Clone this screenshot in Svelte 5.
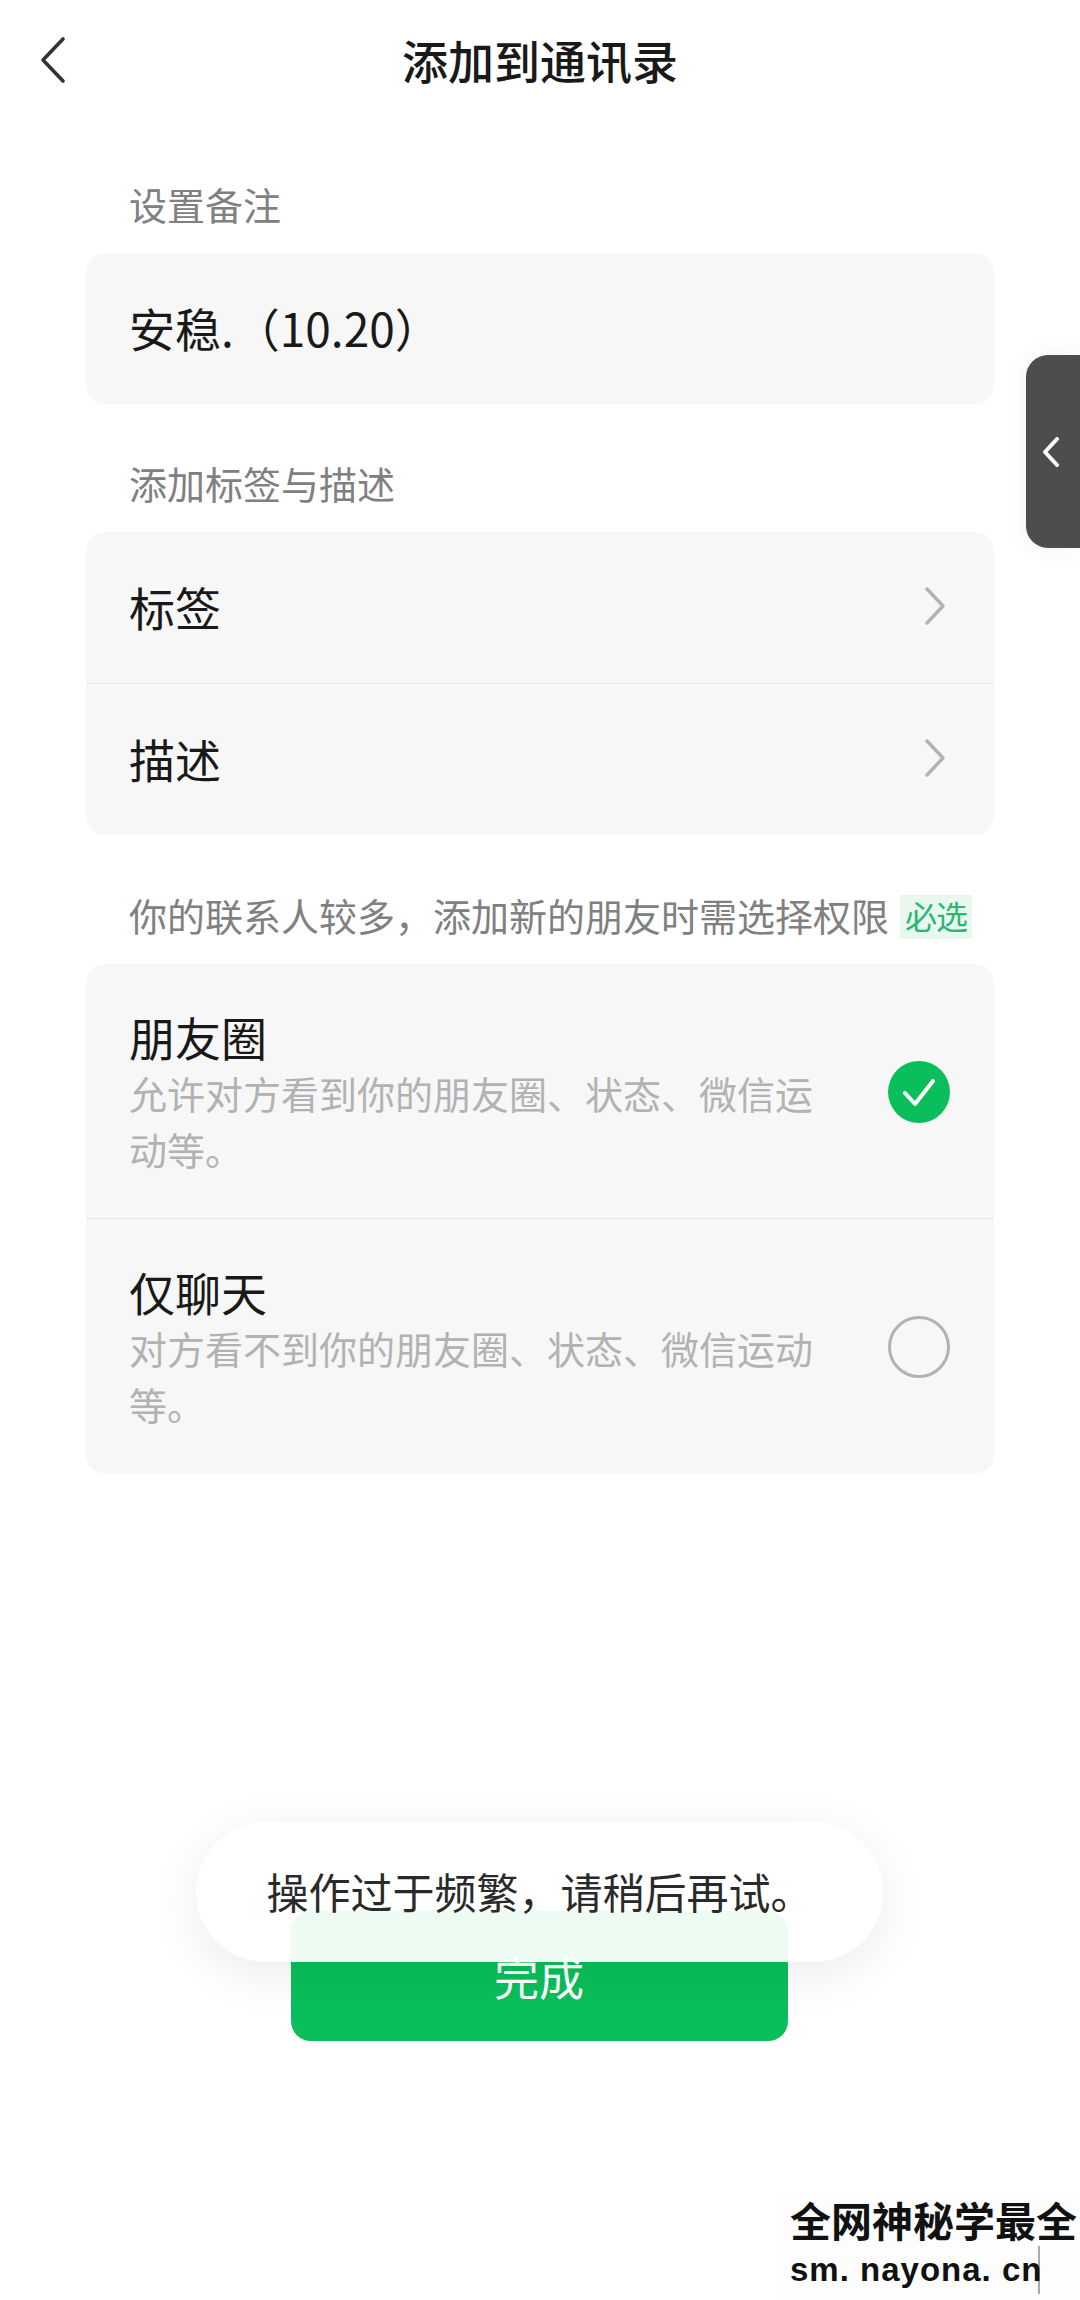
<script>
  const options = [
    { title: '朋友圈', desc: '允许对方看到你的朋友圈、状态、微信运动等。', checked: true },
    { title: '仅聊天', desc: '对方看不到你的朋友圈、状态、微信运动等。', checked: false }
  ];
  const links = ['标签', '描述'];
</script>

<div class="page" lang="zh-CN">
  <header class="header">
    <svg class="back" width="30" height="48" viewBox="0 0 30 48" fill="none" aria-hidden="true">
      <path d="M25 3 L5 24 L25 45" stroke="#333" stroke-width="3.6" stroke-linecap="round" stroke-linejoin="round" />
    </svg>
    <h1>添加到通讯录</h1>
  </header>

  <main class="content">
    <div class="label first">设置备注</div>
    <div class="card"><div class="row">安稳.（10.20）</div></div>

    <div class="label">添加标签与描述</div>
    <div class="card">
      {#each links as link}
        <div class="row link">
          <span>{link}</span>
          <svg width="22" height="38" viewBox="0 0 22 38" fill="none" aria-hidden="true">
            <path d="M3 2 L19 19 L3 36" stroke="#b2b2b2" stroke-width="3.4" stroke-linecap="round" stroke-linejoin="round" />
          </svg>
        </div>
      {/each}
    </div>

    <div class="label perm">
      <span class="perm-text">你的联系人较多，添加新的朋友时需选择权限</span>
      <span class="badge">必选</span>
    </div>
    <div class="card">
      {#each options as o}
        <div class="option">
          <div class="text">
            <div class="opt-title">{o.title}</div>
            <div class="opt-desc">{o.desc}</div>
          </div>
          {#if o.checked}
            <svg class="tick" width="62" height="62" viewBox="0 0 62 62" aria-hidden="true">
              <circle cx="31" cy="31" r="31" fill="#0abf5b" />
              <path d="M17 32 L27 43 L45 20" fill="none" stroke="#fff" stroke-width="4" stroke-linecap="round" stroke-linejoin="round" />
            </svg>
          {:else}
            <svg class="tick" width="62" height="62" viewBox="0 0 62 62" aria-hidden="true">
              <circle cx="31" cy="31" r="29.5" fill="none" stroke="#b2b2b2" stroke-width="3" />
            </svg>
          {/if}
        </div>
      {/each}
    </div>

    <button class="done">完成</button>
  </main>

  <div class="handle">
    <svg width="18" height="30" viewBox="0 0 18 30" fill="none" aria-hidden="true">
      <path d="M15 2 L3 15 L15 28" stroke="#fff" stroke-width="4" stroke-linecap="round" stroke-linejoin="round" />
    </svg>
  </div>

  <div class="toast"><span>操作过于频繁，请稍后再试。</span></div>

  <div class="mark">
    <div class="mark-cn">全网神秘学最全</div>
    <div class="mark-en">sm. nayona. cn</div>
  </div>
</div>

<style>
  :global(body) {
    margin: 0;
    background: #fff;
  }
  .page {
    position: relative;
    width: 1080px;
    height: 2300px;
    overflow: hidden;
    background: #fff;
    font-family: "Noto Sans CJK SC", "Noto Sans", sans-serif;
    color: #191919;
  }
  .header {
    position: relative;
    height: 124px;
    display: flex;
    align-items: center;
    justify-content: center;
    padding-bottom: 6px;
    box-sizing: border-box;
  }
  .back {
    position: absolute;
    left: 38px;
    top: 36px;
  }
  h1 {
    margin: 0;
    font-size: 46px;
    font-weight: 500;
    line-height: 60px;
    color: #191919;
  }
  .content {
    display: flex;
    flex-direction: column;
    padding: 0 86px;
  }
  .label {
    height: 50px;
    line-height: 44px;
    margin: 57px 0 21px 43px;
    font-size: 38px;
    color: #808080;
    white-space: nowrap;
  }
  .label.first {
    margin-top: 58px;
  }
  .label.perm {
    display: flex;
    align-items: center;
    gap: 11px;
    margin-bottom: 22px;
  }
  .perm-text {
    margin-bottom: 4px;
  }
  .badge {
    width: 72px;
    height: 44px;
    line-height: 40px;
    text-align: center;
    font-size: 32px;
    letter-spacing: -1px;
    color: #2bb673;
    background: #e8f8ef;
  }
  .card {
    background: #f7f7f7;
    border-radius: 20px;
    overflow: hidden;
  }
  .row {
    height: 151px;
    box-sizing: border-box;
    display: flex;
    align-items: center;
    padding: 0 48px 4px 43px;
    font-size: 46px;
    color: #191919;
  }
  .link {
    justify-content: space-between;
  }
  .link + .link {
    height: 152px;
    border-top: 1px solid #e8e8e8;
  }
  .option {
    display: flex;
    align-items: center;
    justify-content: space-between;
    padding: 45px 44px 41px 43px;
  }
  .option:last-child {
    padding-bottom: 42px;
  }
  .option + .option {
    border-top: 1px solid #e4e4e4;
  }
  .tick {
    margin-bottom: 2px;
  }
  .text {
    width: 700px;
  }
  .opt-title {
    font-size: 46px;
    line-height: 55px;
    color: #191919;
  }
  .opt-desc {
    margin-top: 1px;
    font-size: 38px;
    line-height: 56px;
    color: #b2b2b2;
  }
  .done {
    align-self: center;
    margin: 437px 2px 0 0;
    width: 497px;
    height: 130px;
    padding: 0;
    border: 0;
    border-radius: 20px;
    background: #0abf5b;
    color: #fff;
    font-family: inherit;
    font-size: 45px;
  }
  .handle {
    position: absolute;
    left: 1026px;
    top: 355px;
    width: 54px;
    height: 193px;
    border-radius: 22px 0 0 22px;
    background: #4d4d4d;
    box-shadow: 0 0 24px rgba(0, 0, 0, 0.06);
    display: flex;
    align-items: center;
    padding-left: 16px;
    box-sizing: border-box;
  }
  .toast {
    position: absolute;
    left: 196px;
    top: 1822px;
    width: 687px;
    height: 140px;
    border-radius: 70px;
    background: rgba(255, 255, 255, 0.93);
    box-shadow: 0 12px 50px rgba(0, 0, 0, 0.08);
    display: flex;
    align-items: center;
    justify-content: center;
    font-size: 42px;
    color: #2a2a2a;
  }
  .toast span {
    margin-bottom: 4px;
  }
  .mark {
    position: absolute;
    left: 778px;
    top: 2198px;
    width: 302px;
    height: 102px;
    padding-left: 12px;
    box-sizing: border-box;
    background: #fdfdfd;
    color: #111;
    font-weight: 700;
  }
  .mark-cn {
    font-size: 41px;
    line-height: 42px;
    white-space: nowrap;
  }
  .mark-en {
    width: 248px;
    height: 48px;
    margin-top: 6px;
    font-family: "Liberation Sans", sans-serif;
    font-size: 33px;
    line-height: 48px;
    letter-spacing: 1px;
    white-space: nowrap;
    border-right: 2px solid #aaa;
  }
</style>
